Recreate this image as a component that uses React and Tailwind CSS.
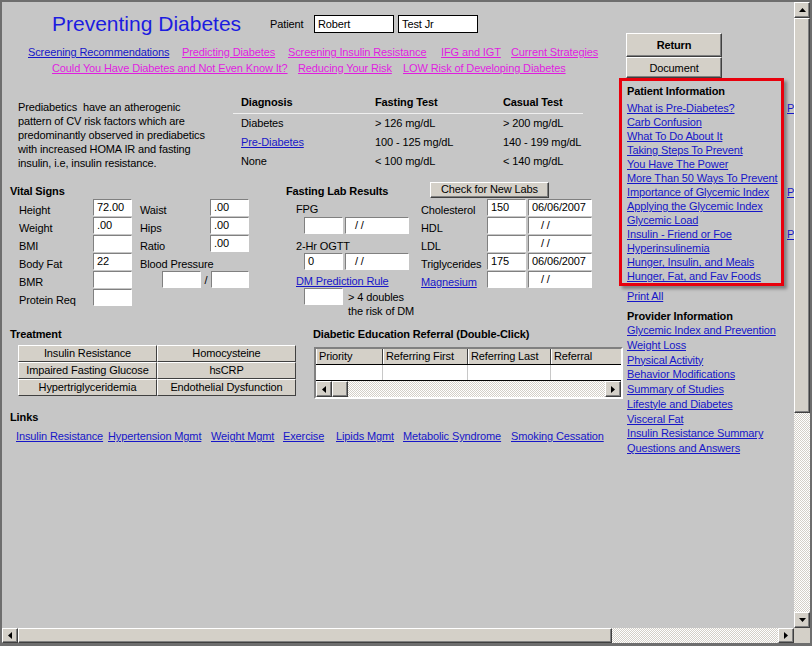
import React from "react";

const blue = "text-[#1616c8] underline";
const pink = "text-[#e01ee0] underline";
const raised =
  "bg-[#d4d0c8] border border-t-white border-l-white border-r-[#404040] border-b-[#404040] shadow-[inset_-1px_-1px_0_#808080]";
const sunken =
  "bg-white border border-t-[#808080] border-l-[#808080] border-r-white border-b-white";
const hatch =
  "bg-[#e4e2dc] bg-[image:repeating-conic-gradient(#d4d0c8_0%_25%,#ffffff_0%_50%)] bg-[length:2px_2px]";

const Field = ({ w = "w-[39px]", className = "", children }) => (
  <div className={`${w} h-[17px] shrink-0 ${sunken} leading-[15px] px-[3px] whitespace-nowrap overflow-hidden ${className}`}>
    {children}
  </div>
);

const Arrow = ({ dir }) => {
  const pts = {
    up: "0,4 7,4 3.5,0",
    down: "0,0 7,0 3.5,4",
    left: "4,0 4,7 0,3.5",
    right: "0,0 0,7 4,3.5",
  }[dir];
  const vert = dir === "up" || dir === "down";
  return (
    <svg width={vert ? 7 : 4} height={vert ? 4 : 7}>
      <polygon points={pts} fill="#000" />
    </svg>
  );
};

const ScrollBtn = ({ dir, className = "w-[16px] h-[16px]" }) => (
  <div className={`${className} shrink-0 ${raised} flex items-center justify-center`}>
    <Arrow dir={dir} />
  </div>
);

const patientLinks = [
  "What is Pre-Diabetes?",
  "Carb Confusion",
  "What To Do About It",
  "Taking Steps To Prevent",
  "You Have The Power",
  "More Than 50 Ways To Prevent",
  "Importance of Glycemic Index",
  "Applying the Glycemic Index",
  "Glycemic Load",
  "Insulin - Friend or Foe",
  "Hyperinsulinemia",
  "Hunger, Insulin, and Meals",
  "Hunger, Fat, and Fav Foods",
];

const providerLinks = [
  "Glycemic Index and Prevention",
  "Weight Loss",
  "Physical Activity",
  "Behavior Modifications",
  "Summary of Studies",
  "Lifestyle and Diabetes",
  "Visceral Fat",
  "Insulin Resistance Summary",
  "Questions and Answers",
];

const treatments = [
  "Insulin Resistance",
  "Homocysteine",
  "Impaired Fasting Glucose",
  "hsCRP",
  "Hypertriglyceridemia",
  "Endothelial Dysfunction",
];

const labs = [
  { name: "Cholesterol", val: "150", date: "06/06/2007" },
  { name: "HDL", val: "", date: "" },
  { name: "LDL", val: "", date: "" },
  { name: "Triglycerides", val: "175", date: "06/06/2007" },
  { name: "Magnesium", val: "", date: "", link: true },
];

function LeftPane() {
  return (
    <div className="w-[617px] shrink-0">
      {/* HEADER */}
      <div className="mt-[8px] h-[28px] flex items-center pl-[50px] whitespace-nowrap">
        <div className="w-[218px] text-[21px] leading-[28px] tracking-normal text-[#1c1ce0]">Preventing Diabetes</div>
        <div className="w-[44px]">Patient</div>
        <div className="w-[80px] h-[18px] bg-white border border-black leading-[16px] px-[3px]">Robert</div>
        <div className="ml-[4px] w-[80px] h-[18px] bg-white border border-black leading-[16px] px-[3px]">Test Jr</div>
      </div>

      {/* TOP LINKS */}
      <div className="mt-[7px] h-[16px] flex pl-[26px] whitespace-nowrap">
        <div className="w-[154px]"><span className={blue}>Screening Recommendations</span></div>
        <div className="w-[106px]"><span className={pink}>Predicting Diabetes</span></div>
        <div className="w-[153px]"><span className={pink}>Screening Insulin Resistance</span></div>
        <div className="w-[70px]"><span className={pink}>IFG and IGT</span></div>
        <div><span className={pink}>Current Strategies</span></div>
      </div>
      <div className="h-[16px] flex pl-[50px] whitespace-nowrap">
        <div className="w-[246px]"><span className={pink}>Could You Have Diabetes and Not Even Know It?</span></div>
        <div className="w-[105px]"><span className={pink}>Reducing Your Risk</span></div>
        <div><span className={pink}>LOW Risk of Developing Diabetes</span></div>
      </div>

      {/* DESCRIPTION + DIAGNOSIS */}
      <div className="mt-[18px] flex whitespace-nowrap">
        <div className="w-[231px] pl-[16px] pt-[5px]">
          <div>Prediabetics&nbsp; have an atherogenic</div>
          <div>pattern of CV risk factors which are</div>
          <div>predominantly observed in prediabetics</div>
          <div>with increased HOMA IR and fasting</div>
          <div>insulin, i.e, insulin resistance.</div>
        </div>
        <div className="w-[350px]">
          <div className="flex h-[17px] font-bold">
            <div className="w-[142px] pl-[8px]">Diagnosis</div>
            <div className="w-[128px]">Fasting Test</div>
            <div>Casual Test</div>
          </div>
          <div className="mt-[1px] h-[1px] bg-[#efefef]" />
          <div className="mt-[2px]">
            <div className="flex h-[19px]">
              <div className="w-[142px] pl-[8px]">Diabetes</div>
              <div className="w-[128px]">&gt; 126 mg/dL</div>
              <div>&gt; 200 mg/dL</div>
            </div>
            <div className="flex h-[19px]">
              <div className="w-[142px] pl-[8px]"><span className={blue}>Pre-Diabetes</span></div>
              <div className="w-[128px]">100 - 125 mg/dL</div>
              <div>140 - 199 mg/dL</div>
            </div>
            <div className="flex h-[19px]">
              <div className="w-[142px] pl-[8px]">None</div>
              <div className="w-[128px]">&lt; 100 mg/dL</div>
              <div>&lt; 140 mg/dL</div>
            </div>
          </div>
        </div>
      </div>

      {/* VITALS / LABS */}
      <div className="mt-[9px] flex items-start whitespace-nowrap">
        <div className="w-[284px] shrink-0">
          <div className="mt-[2px] pl-[8px] h-[14px] font-bold">Vital Signs</div>
          <div className="mt-[1px] pl-[17px]">
            <div className="flex h-[18px]">
              <div className="w-[74px] pt-[4px]">Height</div>
              <Field>72.00</Field>
              <div className="ml-[8px] w-[70px] pt-[4px]">Waist</div>
              <Field>.00</Field>
            </div>
            <div className="flex h-[18px]">
              <div className="w-[74px] pt-[4px]">Weight</div>
              <Field>.00</Field>
              <div className="ml-[8px] w-[70px] pt-[4px]">Hips</div>
              <Field>.00</Field>
            </div>
            <div className="flex h-[18px]">
              <div className="w-[74px] pt-[4px]">BMI</div>
              <Field />
              <div className="ml-[8px] w-[70px] pt-[4px]">Ratio</div>
              <Field>.00</Field>
            </div>
            <div className="flex h-[18px]">
              <div className="w-[74px] pt-[4px]">Body Fat</div>
              <Field>22</Field>
              <div className="ml-[8px] pt-[4px]">Blood Pressure</div>
            </div>
            <div className="flex h-[18px]">
              <div className="w-[74px] pt-[4px]">BMR</div>
              <Field />
              <Field className="ml-[30px]" />
              <div className="w-[10px] text-center pt-[2px]">/</div>
              <Field w="w-[38px]" />
            </div>
            <div className="flex h-[18px]">
              <div className="w-[74px] pt-[4px]">Protein Req</div>
              <Field />
            </div>
          </div>
        </div>

        <div className="w-[134px] shrink-0">
          <div className="mt-[2px] h-[14px] font-bold">Fasting Lab Results</div>
          <div className="mt-[4px] pl-[10px] h-[14px]">FPG</div>
          <div className="mt-[1px] ml-[18px] flex">
            <Field />
            <Field w="w-[64px]" className="ml-[2px] pl-[9px]">/ /</Field>
          </div>
          <div className="mt-[5px] pl-[10px] h-[14px]">2-Hr OGTT</div>
          <div className="ml-[18px] flex">
            <Field>0</Field>
            <Field w="w-[64px]" className="ml-[2px] pl-[9px]">/ /</Field>
          </div>
          <div className="mt-[4px] pl-[10px] h-[14px]"><span className={blue}>DM Prediction Rule</span></div>
          <div className="ml-[18px] flex items-start">
            <Field />
            <div className="ml-[5px] mt-[2px]">
              <div>&gt; 4 doubles</div>
              <div>the risk of DM</div>
            </div>
          </div>
        </div>

        <div className="w-[199px] shrink-0">
          <div className={`ml-[10px] w-[119px] h-[16px] ${raised} text-center leading-[13px]`}>Check for New Labs</div>
          <div className="mt-[1px]">
            {labs.map((l) => (
              <div key={l.name} className="flex h-[18px]">
                <div className="w-[67px] pl-[1px] pt-[4px]">
                  {l.link ? <span className={blue}>{l.name}</span> : l.name}
                </div>
                <Field>{l.val}</Field>
                <Field w="w-[64px]" className={`ml-[2px] ${l.date ? "" : "pl-[12px]"}`}>
                  {l.date || "/ /"}
                </Field>
              </div>
            ))}
          </div>
        </div>
      </div>

      {/* TREATMENT / REFERRAL */}
      <div className="mt-[9px] flex items-start whitespace-nowrap">
        <div className="w-[311px] shrink-0">
          <div className="pl-[8px] h-[14px] font-bold">Treatment</div>
          <div className="mt-[4px] ml-[16px] grid grid-cols-[139px_139px]">
            {treatments.map((t) => (
              <div
                key={t}
                className="h-[17px] leading-[15px] text-center bg-[#d4d0c8] border border-t-white border-l-white border-r-[#404040] border-b-[#404040]"
              >
                {t}
              </div>
            ))}
          </div>
        </div>
        <div>
          <div className="h-[14px] font-bold">Diabetic Education Referral (Double-Click)</div>
          <div className="mt-[6px] ml-[1px] w-[309px] h-[52px] border-2 border-t-[#808080] border-l-[#808080] border-r-white border-b-white bg-white">
            <div className="flex h-[16px] bg-[#d4d0c8] border-b border-black leading-[15px]">
              <div className="w-[67px] pl-[2px] border-l border-l-white border-r border-r-[#404040]">Priority</div>
              <div className="w-[85px] pl-[2px] border-l border-l-white border-r border-r-[#404040]">Referring First</div>
              <div className="w-[83px] pl-[2px] border-l border-l-white border-r border-r-[#404040]">Referring Last</div>
              <div className="flex-1 pl-[2px] border-l border-l-white">Referral</div>
            </div>
            <div className="flex h-[16px] border-b border-black">
              <div className="w-[67px] border-r border-r-[#c8c8c8]" />
              <div className="w-[85px] border-r border-r-[#c8c8c8]" />
              <div className="w-[83px] border-r border-r-[#c8c8c8]" />
              <div className="flex-1" />
            </div>
            <div className="flex h-[16px]">
              <ScrollBtn dir="left" />
              <div className={`w-[16px] h-[16px] ${raised}`} />
              <div className={`flex-1 ${hatch}`} />
              <ScrollBtn dir="right" />
            </div>
          </div>
        </div>
      </div>

      {/* LINKS */}
      <div className="mt-[11px] pl-[8px] h-[14px] font-bold">Links</div>
      <div className="mt-[5px] pl-[14px] flex whitespace-nowrap">
        <div className="w-[92px]"><span className={blue}>Insulin Resistance</span></div>
        <div className="w-[103px]"><span className={blue}>Hypertension Mgmt</span></div>
        <div className="w-[72px]"><span className={blue}>Weight Mgmt</span></div>
        <div className="w-[53px]"><span className={blue}>Exercise</span></div>
        <div className="w-[67px]"><span className={blue}>Lipids Mgmt</span></div>
        <div className="w-[108px]"><span className={blue}>Metabolic Syndrome</span></div>
        <div><span className={blue}>Smoking Cessation</span></div>
      </div>
    </div>
  );
}

function RightPane() {
  return (
    <div className="w-[175px] shrink-0 whitespace-nowrap">
      <div className={`mt-[31px] ml-[7px] w-[96px] h-[24px] ${raised} flex items-center justify-center font-bold`}>Return</div>
      <div className={`ml-[7px] w-[96px] h-[21px] ${raised} flex items-center justify-center`}>Document</div>

      <div className="flex">
        <div className="w-[165px] h-[208px] shrink-0 border-[3px] border-[#e8000c] shadow-[3px_3px_3px_rgba(0,0,0,0.35)] pl-[5px] pt-[3px] overflow-hidden">
          <div className="h-[14px] font-bold">Patient Information</div>
          <div className="mt-[3px]">
            {patientLinks.map((l) => (
              <div key={l} className="h-[14px]"><span className={blue}>{l}</span></div>
            ))}
          </div>
        </div>
        <div className="ml-[3px] pt-[23px] shrink-0">
          {patientLinks.map((l, i) => (
            <div key={l} className="h-[14px]">
              {(i === 0 || i === 6 || i === 9) && <span className={blue}>Pr</span>}
            </div>
          ))}
        </div>
      </div>

      <div className="mt-[3px] ml-[8px] h-[14px]"><span className={blue}>Print All</span></div>
      <div className="mt-[6px] ml-[8px] h-[14px] font-bold">Provider Information</div>
      <div className="ml-[8px]">
        {providerLinks.map((l) => (
          <div key={l} className="h-[14.75px]"><span className={blue}>{l}</span></div>
        ))}
      </div>
    </div>
  );
}

export default function App() {
  return (
    <div className="w-[812px] h-[646px] flex flex-col overflow-hidden bg-[#c6c6c6] border-t-2 border-l-2 border-r-2 border-b-[3px] border-[#6e6e6e] font-['Liberation_Sans',Arial,sans-serif] text-[11px] leading-[14px] tracking-[-0.12px] text-black">
      <div className="flex h-[626px] shrink-0">
        <div className="w-[792px] h-full overflow-hidden flex">
          <LeftPane />
          <RightPane />
        </div>
        <div className="w-[16px] h-full flex flex-col">
          <ScrollBtn dir="up" />
          <div className={`h-[395px] shrink-0 ${raised}`} />
          <div className={`flex-1 ${hatch}`} />
          <ScrollBtn dir="down" />
        </div>
      </div>
      <div className="flex h-[15px] shrink-0">
        <ScrollBtn dir="left" className="w-[16px] h-[15px]" />
        <div className={`w-[594px] h-[15px] shrink-0 ${raised}`} />
        <div className={`flex-1 ${hatch}`} />
        <ScrollBtn dir="right" className="w-[16px] h-[15px]" />
        <div className="w-[16px] h-[15px] bg-[#d4d0c8]" />
      </div>
    </div>
  );
}
